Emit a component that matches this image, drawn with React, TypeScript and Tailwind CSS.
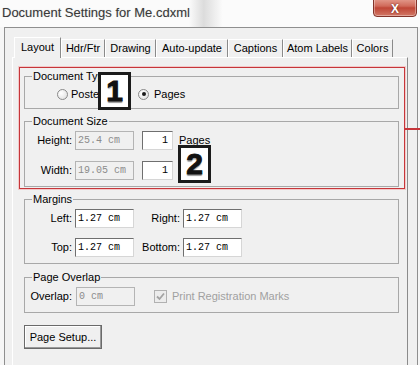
import React from 'react';

const tabs = [
  { label: 'Layout', w: 'w-[47px]', active: true },
  { label: 'Hdr/Ftr', w: 'w-[44px]' },
  { label: 'Drawing', w: 'w-[51px]' },
  { label: 'Auto-update', w: 'w-[72px]' },
  { label: 'Captions', w: 'w-[55px]' },
  { label: 'Atom Labels', w: 'w-[69px]' },
  { label: 'Colors', w: 'w-[41px]' },
];

const Field = ({ value, disabled, narrow }: { value: string; disabled?: boolean; narrow?: boolean }) => (
  <div
    className={`h-[19px] flex items-center px-[2px] font-['Liberation_Mono',monospace] text-[10px] ${
      narrow ? 'w-[31px] justify-end pr-[4px]' : 'w-[59px]'
    } ${
      disabled
        ? 'border border-[#b4b4b4] bg-[#f0f0f0] text-[#8c8c8c]'
        : 'border border-t-[#6f6f6f] border-l-[#6f6f6f] border-r-[#d6d6d6] border-b-[#d6d6d6] bg-white text-black'
    }`}
  >
    {value}
  </div>
);

const Group = ({ title, className, children }: { title: string; className?: string; children: React.ReactNode }) => (
  <fieldset className={`border border-[#a8a8a8] w-[375px] ${className ?? ''}`}>
    <legend className="ml-[7px] px-[1px] leading-[13px]">{title}</legend>
    {children}
  </fieldset>
);

const Radio = ({ checked }: { checked?: boolean }) => (
  <span className="w-[11px] h-[11px] rounded-full border border-[#8a8a8a] bg-[radial-gradient(circle_at_35%_35%,#ffffff,#dcdcdc)] flex items-center justify-center">
    {checked && <span className="w-[4px] h-[4px] rounded-full bg-[#1a1a1a]" />}
  </span>
);

const Callout = ({ n, className }: { n: string; className: string }) => (
  <div
    className={`absolute z-20 w-[33px] h-[38px] border-[3px] border-[#1b1b1b] bg-white flex items-center justify-center font-['Liberation_Sans',sans-serif] font-bold text-[30px] leading-none text-[#111] [-webkit-text-stroke:1px_#111] [text-shadow:0_2px_1px_#9a9a9a] ${className}`}
  >
    {n}
  </div>
);

export default function App() {
  return (
    <div className="w-[420px] h-[365px] overflow-hidden bg-[#f6f6f6] flex flex-col font-['Liberation_Sans',Arial,sans-serif] text-[11px] text-black relative">
      {/* title bar */}
      <div className="h-[27px] shrink-0 relative flex items-start pt-[5px] pl-[2px] bg-[linear-gradient(90deg,#fbfbfb_45%,#dcdcdc_48.5%,#e6e6e6_50%,#fbfbfb_53%)]">
        <span className="text-[13px] leading-[15px] text-[#3a3a3a] [text-shadow:0_0_1px_#c4c4c4]">Document Settings for Me.cdxml</span>
        <div className="absolute top-[-3px] right-[3px] w-[44px] h-[20px] rounded-b-[4px] border border-[#83342a] bg-[linear-gradient(#e6a294,#d06a5a_45%,#bf4636_55%,#d27866)] flex items-center justify-center pt-[3px] shadow-[inset_0_0_0_1px_rgba(255,255,255,0.35)]">
          <span className="text-white font-bold text-[12px] leading-none [text-shadow:0_0_2px_#5a1a12]">X</span>
        </div>
      </div>

      {/* window body */}
      <div className="ml-[4px] w-[414px] flex-1 border-l border-t border-r border-[#8f8f8f] bg-[#f0f0f0] pt-[9px]">
        <div className="ml-[7px] w-[396px]">
          <div className="h-[20px] pl-[2px] flex items-end">
            {tabs.map((t) =>
              t.active ? (
                <div
                  key={t.label}
                  className={`${t.w} h-[21px] -mb-px relative z-10 bg-[#f0f0f0] border-l border-t border-white border-r border-r-[#8a8a8a] flex items-center justify-center pb-[2px]`}
                >
                  {t.label}
                </div>
              ) : (
                <div
                  key={t.label}
                  className={`${t.w} h-[18px] border-l border-t border-white border-r border-r-[#8a8a8a] flex items-center justify-center`}
                >
                  {t.label}
                </div>
              )
            )}
          </div>

          <div className="h-[320px] border-l border-t border-white border-r border-r-[#8b8b8b] pt-[9px]">
            {/* highlighted region */}
            <div className="ml-[6px] w-[386px] relative border border-[#c6363a] shadow-[0_0_0_1px_#f3c9c9]">
              <div className="absolute z-20 left-full top-[60px] w-[18px] h-[2px] bg-[#c6363a]" />
              <Callout n="1" className="left-[78px] top-[4px]" />
              <Callout n="2" className="left-[158px] top-[77px]" />

              <Group title="Document Type" className="ml-[4px] mt-[2px] pb-[6px]">
                <div className="mt-[3px] h-[16px] flex items-center pl-[32px]">
                  <div className="w-[81px] flex items-center gap-[3px]">
                    <Radio />
                    <span>Poster</span>
                  </div>
                  <div className="flex items-center gap-[5px]">
                    <Radio checked />
                    <span>Pages</span>
                  </div>
                </div>
              </Group>

              <Group title="Document Size" className="ml-[4px] mt-[6px] mb-[1px] pb-[6px]">
                <div className="mt-[3px] flex items-center">
                  <span className="w-[47px] text-right">Height:</span>
                  <div className="ml-[3px]"><Field value="25.4 cm" disabled /></div>
                  <div className="ml-[8px]"><Field value="1" narrow /></div>
                  <span className="ml-[6px]">Pages</span>
                </div>
                <div className="mt-[11px] flex items-center">
                  <span className="w-[47px] text-right">Width:</span>
                  <div className="ml-[3px]"><Field value="19.05 cm" disabled /></div>
                  <div className="ml-[8px]"><Field value="1" narrow /></div>
                </div>
              </Group>
            </div>

            <Group title="Margins" className="ml-[11px] mt-[4px] pb-[6px]">
              <div className="mt-[3px] flex items-center">
                <span className="w-[47px] text-right">Left:</span>
                <div className="ml-[3px]"><Field value="1.27 cm" /></div>
                <span className="w-[46px] text-right">Right:</span>
                <div className="ml-[3px]"><Field value="1.27 cm" /></div>
              </div>
              <div className="mt-[10px] flex items-center">
                <span className="w-[47px] text-right">Top:</span>
                <div className="ml-[3px]"><Field value="1.27 cm" /></div>
                <span className="w-[46px] text-right">Bottom:</span>
                <div className="ml-[3px]"><Field value="1.27 cm" /></div>
              </div>
            </Group>

            <Group title="Page Overlap" className="ml-[11px] mt-[7px] pb-[6px]">
              <div className="mt-[3px] flex items-center">
                <span className="w-[47px] text-right">Overlap:</span>
                <div className="ml-[4px]"><Field value="0 cm" disabled /></div>
                <span className="ml-[19px] w-[13px] h-[13px] border border-[#b1b1b1] bg-[#ececec] flex items-center justify-center">
                  <svg width="9" height="9" viewBox="0 0 9 9">
                    <path d="M1 4.5 L3.5 7 L8 1.5" fill="none" stroke="#a3a3a3" strokeWidth="1.8" />
                  </svg>
                </span>
                <span className="ml-[5px] text-[#a0a0a0]">Print Registration Marks</span>
              </div>
            </Group>

            <button className="ml-[11px] mt-[12px] w-[78px] h-[24px] border border-[#6a6a6a] bg-[#f0f0f0] shadow-[inset_-1px_-1px_#9a9a9a,inset_1px_1px_#ffffff] text-[11px] text-black flex items-center justify-center">
              Page Setup...
            </button>
          </div>
        </div>
      </div>
    </div>
  );
}
